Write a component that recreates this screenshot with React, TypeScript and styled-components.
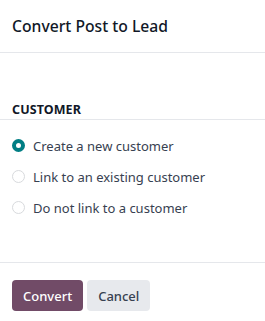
import React, { useState } from "react";
import styled, { createGlobalStyle } from "styled-components";

const Global = createGlobalStyle`
  html, body { margin: 0; padding: 0; background: #fff; }
  body { font-family: "Noto Sans", "Open Sans", sans-serif; color: #374151; }
  * { box-sizing: border-box; }
`;

const Dialog = styled.div`
  width: 265px;
  height: 321px;
  display: flex;
  flex-direction: column;
  background: #fff;
`;

const Header = styled.div`
  height: 53px;
  padding: 0 12px;
  display: flex;
  align-items: center;
  border-bottom: 1px solid #e5e7eb;
`;

const Title = styled.h4`
  margin: 0;
  font-size: 15.7px;
  font-weight: 500;
  color: #111827;
`;

const Body = styled.div`
  flex: 1;
  padding-top: 48px;
  display: flex;
  flex-direction: column;
`;

const SectionTitle = styled.div`
  padding: 0 12px 1px;
  font-size: 12.5px;
  font-weight: 700;
  color: #111827;
  border-bottom: 1px solid #e5e7eb;
  letter-spacing: 0.1px;
`;

const Options = styled.div`
  padding: 15px 12px 0;
  display: flex;
  flex-direction: column;
  gap: 10px;
`;

const Option = styled.label`
  display: flex;
  align-items: center;
  gap: 8px;
  height: 21px;
  font-size: 13px;
  color: #374151;
  cursor: pointer;
`;

const Radio = styled.span<{ $checked: boolean }>`
  width: 13px;
  height: 13px;
  border-radius: 50%;
  flex: none;
  background: #fff;
  border: ${(p) => (p.$checked ? "4px solid #017e84" : "1px solid #d8dadd")};
`;

const Footer = styled.div`
  height: 59px;
  border-top: 1px solid #e5e7eb;
  padding: 17px 12px 0;
  display: flex;
  gap: 4px;
  align-items: flex-start;
`;

const Button = styled.button<{ $primary?: boolean }>`
  height: 31px;
  padding: 0 11px;
  border: none;
  border-radius: 4px;
  font-family: inherit;
  font-size: 13px;
  font-weight: 500;
  background: ${(p) => (p.$primary ? "#714b67" : "#e7e9ed")};
  color: ${(p) => (p.$primary ? "#fff" : "#374151")};
  cursor: pointer;
`;

const options = [
  "Create a new customer",
  "Link to an existing customer",
  "Do not link to a customer",
];

export default function App() {
  const [sel, setSel] = useState(0);
  return (
    <>
      <Global />
      <Dialog>
        <Header>
          <Title>Convert Post to Lead</Title>
        </Header>
        <Body>
          <SectionTitle>CUSTOMER</SectionTitle>
          <Options>
            {options.map((o, i) => (
              <Option key={o} onClick={() => setSel(i)}>
                <Radio $checked={sel === i} />
                {o}
              </Option>
            ))}
          </Options>
        </Body>
        <Footer>
          <Button $primary>Convert</Button>
          <Button>Cancel</Button>
        </Footer>
      </Dialog>
    </>
  );
}
